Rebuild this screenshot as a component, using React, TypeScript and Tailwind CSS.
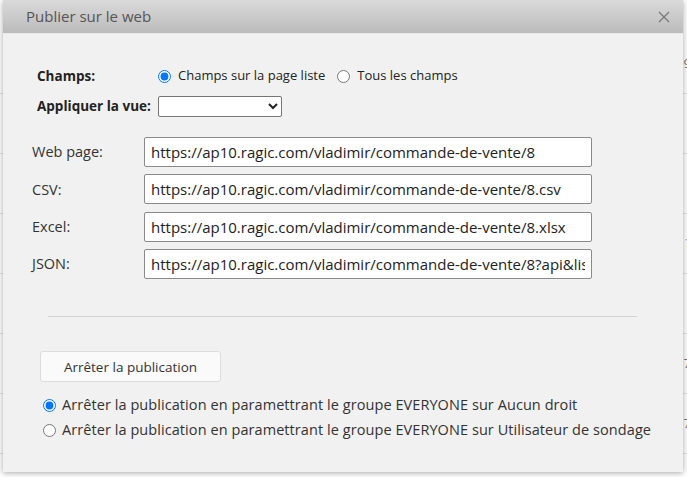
import React from "react";

const font = { fontFamily: '"Open Sans", "Noto Sans", Arial, sans-serif' };

const links = [
  { label: "Web page:", url: "https://ap10.ragic.com/vladimir/commande-de-vente/8" },
  { label: "CSV:", url: "https://ap10.ragic.com/vladimir/commande-de-vente/8.csv" },
  { label: "Excel:", url: "https://ap10.ragic.com/vladimir/commande-de-vente/8.xlsx" },
  { label: "JSON:", url: "https://ap10.ragic.com/vladimir/commande-de-vente/8?api&listing" },
];

const sideChars = ["9", "", "", "?", ")", "7", "7", "4"];

export default function App() {
  return (
    <div className="relative w-[687px] h-[477px] overflow-hidden bg-white" style={font}>
      {/* list page underneath the dialog */}
      <div className="flex flex-col pt-[34px]">
        {sideChars.map((c, i) => (
          <div key={i} className="h-[60px] border-b border-[#e4e4e4] flex items-center justify-end text-[13px] text-[#777]">
            <span className="-mr-[4px]">{c}</span>
          </div>
        ))}
      </div>

      {/* dialog */}
      <div className="absolute left-[3px] top-0 w-[680px] h-[472px] flex flex-col bg-[#f1f1f1] shadow-[0_1px_6px_rgba(0,0,0,0.35)]">
        <div className="h-[34px] shrink-0 flex items-center justify-between pl-[23px] pr-[13px] bg-gradient-to-b from-[#dadada] to-[#bbbbbb] border-b border-[#e9e9e9]">
          <span className="text-[15px] text-[#555]">Publier sur le web</span>
          <svg width="12" height="12" viewBox="0 0 12 12" className="text-[#777]">
            <path d="M1 1 L11 11 M11 1 L1 11" stroke="currentColor" strokeWidth="1.2" fill="none" />
          </svg>
        </div>

        <div className="flex flex-col pl-[29px] pr-[46px] pt-[31px] text-[14px] text-[#222]">
          <div className="flex items-center pl-[5px] h-[22px] text-[13px]">
            <span className="w-[121px] font-bold text-[13.5px]">Champs:</span>
            <label className="flex items-center gap-[7px]">
              <input type="radio" name="fields" defaultChecked className="m-0 w-[13px] h-[13px]" />
              <span>Champs sur la page liste</span>
            </label>
            <label className="flex items-center gap-[7px] ml-[12px]">
              <input type="radio" name="fields" className="m-0 w-[13px] h-[13px]" />
              <span>Tous les champs</span>
            </label>
          </div>
          <div className="flex items-center pl-[5px] mt-[9px] text-[13.5px]">
            <span className="w-[121px] font-bold">Appliquer la vue:</span>
            <select className="w-[124px] h-[21px] bg-white border border-[#767676] rounded-[2px] text-[13px]">
              <option></option>
            </select>
          </div>

          <div className="flex flex-col gap-[7.4px] mt-[20px]">
            {links.map((l) => (
              <div key={l.label} className="flex items-center">
                <span className="w-[112px] text-[14.5px] text-[#333]">{l.label}</span>
                <input
                  readOnly
                  value={l.url}
                  className="w-[448px] h-[30px] bg-white border border-[#8a8a8a] rounded-[2px] px-[6px] text-[15px] text-[#222] outline-none"
                />
              </div>
            ))}
          </div>

          <div className="mt-[37px] ml-[16px] border-t border-[#d2d2d2]" />

          <button className="mt-[34px] ml-[8px] w-[181px] h-[31px] bg-[#fafafa] border border-[#dcdcdc] rounded-[3px] text-[13.5px] text-[#333]">
            Arrêter la publication
          </button>

          <div className="flex flex-col mt-[12px] ml-[11px] gap-[3px] text-[14.5px] tracking-[0.07px] text-[#333] whitespace-nowrap">
            <label className="flex items-center gap-[6px] h-[22px]">
              <input type="radio" name="stop" defaultChecked className="m-0 w-[13px] h-[13px] shrink-0" />
              <span>Arrêter la publication en paramettrant le groupe EVERYONE sur Aucun droit</span>
            </label>
            <label className="flex items-center gap-[6px] h-[22px]">
              <input type="radio" name="stop" className="m-0 w-[13px] h-[13px] shrink-0" />
              <span>Arrêter la publication en paramettrant le groupe EVERYONE sur Utilisateur de sondage</span>
            </label>
          </div>
        </div>
      </div>
    </div>
  );
}
